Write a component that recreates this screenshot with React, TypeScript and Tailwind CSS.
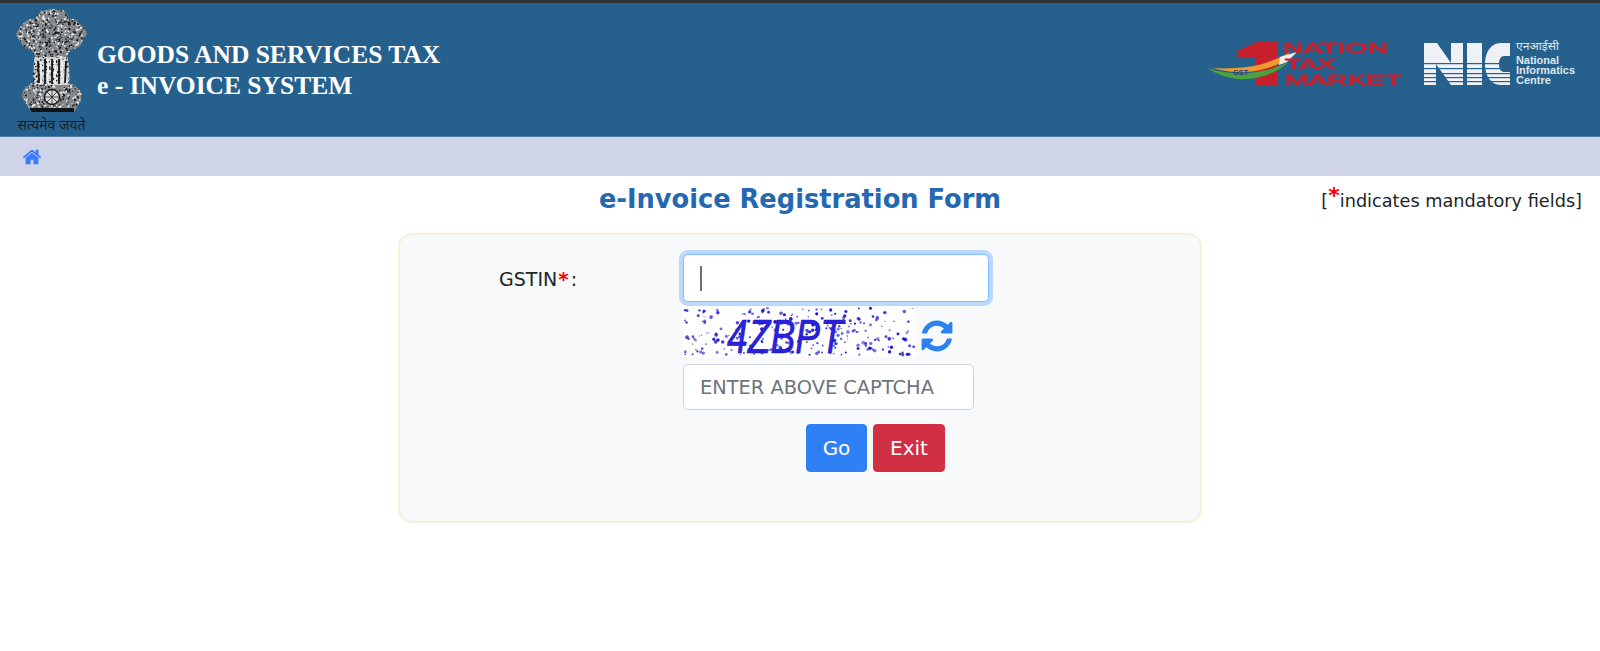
function rng(seed: number) {
  let s = seed
  return () => {
    s = (s * 16807) % 2147483647
    return s / 2147483647
  }
}

const emblemDots = (() => {
  const r = rng(77)
  return Array.from({ length: 1500 }, () => ({ x: r() * 71, y: r() * 103, d: r() > 0.45, s: 0.4 + r() * 0.7 }))
})()

const captchaDots = (() => {
  const r = rng(4242)
  return Array.from({ length: 260 }, () => ({ x: 2 + r() * 229, y: 2 + r() * 47, s: 0.6 + r() * 1.3, o: 0.5 + r() * 0.5 }))
})()

function Emblem() {
  return (
    <svg width="71" height="103" viewBox="0 0 71 103" className="block blur-[0.3px]">
      <defs>
        <clipPath id="emblem-clip">
          <path d="M26 3c4-3 14-4 20-2 5 2 7 6 7 9 5-1 9 1 12 5 3 3 5 6 6 10-2 4-5 7-6 11-3 3-7 5-11 5-1 3-2 4-3 6 2 8 3 18 2 27 6 2 9 4 11 8 3 4 2 9-1 12-1 3-3 6-5 9H16c-3-3-5-6-6-9-4-4-5-8-3-12 2-4 6-7 10-8 0-9 0-19 2-27-1-2-3-3-3-6-4 0-8-2-10-5-2-4-4-8-6-11 2-4 4-7 7-10 3-4 8-6 13-5 0-3 2-6 6-9z" />
        </clipPath>
      </defs>
      <g clipPath="url(#emblem-clip)">
        <rect width="71" height="103" fill="#85888b" />
        <rect x="18" y="48" width="36" height="28" fill="#cfd1d2" />
        {emblemDots.map((p, i) => (
          <circle key={i} cx={p.x} cy={p.y} r={p.s} fill={p.d ? '#16181b' : '#f2f3f3'} />
        ))}
        <path d="M22 52l1 22M29 50v25M36 50v25M43 50v25M50 52l-1 22" stroke="#15171a" strokeWidth="1.8" fill="none" />
        <path d="M25 52v22M32 51v24M39 51v24M46 52v22" stroke="#f4f5f5" strokeWidth="1.6" fill="none" />
        <circle cx="36" cy="88" r="7.5" fill="#d6d8d8" stroke="#15171a" strokeWidth="1.3" />
        <path d="M36 81v15M29 88h15M31 83l10 10M41 83L31 93" stroke="#15171a" strokeWidth="0.7" />
        <rect x="14" y="99" width="44" height="4" fill="#111316" />
      </g>
    </svg>
  )
}

function TaxLogo() {
  return (
    <svg width="210" height="50" viewBox="0 0 210 50" className="block blur-[0.3px]">
      <path d="M37 11L57 2h21v44H56V18H37z" fill="#c5202c" />
      <path d="M13 28c12 1 24 0 34-1 16-2 31-8 43-15l-7 10c-10 5-23 9-36 10-12 1-24-1-34-4z" fill="#ef9a2e" />
      <path d="M80 17l17-5-10 10-8 3z" fill="#f4efe6" />
      <path d="M7 28c12 4 26 6 40 5 15-1 30-5 41-11-8 9-24 16-41 17-15 1-29-4-40-11z" fill="#4aa23a" />
      <text x="33" y="35" fontFamily="'Liberation Sans', sans-serif" fontWeight="700" fontSize="7.5" fill="#23356f">GST</text>
      <g fontFamily="'Liberation Sans', sans-serif" fill="#c9202f" stroke="#c9202f" strokeWidth="0.8">
        <text x="83" y="13" fontSize="14" textLength="105" lengthAdjust="spacingAndGlyphs">NATION</text>
        <text x="85" y="29" fontSize="14" textLength="50" lengthAdjust="spacingAndGlyphs">TAX</text>
        <text x="85" y="45" fontSize="14" textLength="117" lengthAdjust="spacingAndGlyphs">MARKET</text>
      </g>
    </svg>
  )
}

function NicLogo() {
  return (
    <svg width="152" height="48" viewBox="0 0 152 48" className="block">
      <path d="M0 3h13l14 20V3h12v42H27L12 24v21H0zM43 3h15v42H43zM86 3H77C67 3 61 12 61 24s6 21 16 21h9V32h-6c-3 0-5-3-5-8s2-8 5-8h6z" fill="#eef2f6" />
      {[23, 28, 33, 37, 41].map(y => (
        <rect key={y} x="0" y={y} width="88" height="1.2" fill="#26618d" />
      ))}
      <g fill="#dfe7ee" fontFamily="'Liberation Sans', sans-serif" fontWeight="700" fontSize="10">
        <text x="92" y="24" textLength="43" lengthAdjust="spacingAndGlyphs">National</text>
        <text x="92" y="34" textLength="59" lengthAdjust="spacingAndGlyphs">Informatics</text>
        <text x="92" y="44" textLength="35" lengthAdjust="spacingAndGlyphs">Centre</text>
      </g>
      <text x="92" y="10" fill="#dfe7ee" fontSize="10.5" fontFamily="'Noto Sans', sans-serif" textLength="43" lengthAdjust="spacingAndGlyphs">एनआईसी</text>
    </svg>
  )
}

function Captcha() {
  return (
    <svg width="233" height="51" viewBox="0 0 233 51" className="block bg-white shrink-0 overflow-visible">
      {captchaDots.map((p, i) => (
        <circle key={i} cx={p.x} cy={p.y} r={p.s} fill="#1a12c8" opacity={p.o} />
      ))}
      <text x="44" y="47" fontFamily="'Liberation Sans', sans-serif" fontStyle="italic" fontSize="49" fill="#2a22d8" stroke="#1a12c8" strokeWidth="0.6" textLength="116" lengthAdjust="spacingAndGlyphs">4ZBPT</text>
    </svg>
  )
}

export default function App() {
  return (
    <div className="min-h-[651px] bg-white font-['DejaVu_Sans',sans-serif] text-[#212529]">
      <div className="h-[3px] bg-[#2f3336]" />
      <header className="h-[134px] bg-[#26618d] flex border-b border-[#4f7aa8]">
        <div className="ml-4 mt-[6px] w-[71px] flex flex-col items-center">
          <Emblem />
          <span className="text-[14px] leading-[16px] mt-[5px] text-[#16202a] whitespace-nowrap font-['Noto_Sans',sans-serif]">सत्यमेव जयते</span>
        </div>
        <div className="ml-[10px] mt-[36px] font-['Liberation_Serif',serif] font-bold text-white text-[25.5px] leading-[31px]">
          <div>GOODS AND SERVICES TAX</div>
          <div>e - INVOICE SYSTEM</div>
        </div>
        <div className="ml-auto mr-[24px] mt-[37px] flex items-start gap-[14px]">
          <TaxLogo />
          <NicLogo />
        </div>
      </header>
      <nav className="h-[39px] bg-[#cfd4e8] flex items-center pl-[22px]">
        <svg width="20" height="20" viewBox="0 0 1792 1792" fill="#3b7cff">
          <path d="M1472 992v480q0 26-19 45t-45 19h-384v-384h-256v384h-384q-26 0-45-19t-19-45v-480q0-1 .5-3t.5-3l575-474 575 474q1 2 1 6zm223-69l-62 74q-8 9-21 11h-3q-13 0-21-7l-692-577-692 577q-12 8-24 7-13-2-21-11l-62-74q-8-10-7-23.500t11-21.500l719-599q32-26 76-26t76 26l244 204v-195q0-14 9-23t23-9h192q14 0 23 9t9 23v408l219 182q10 8 11 21.500t-7 23.500z" />
        </svg>
      </nav>
      <div className="relative h-[57px] flex justify-center pt-[5px]">
        <h1 className="text-[25.7px] leading-[36px] font-bold text-[#2368b0]">e-Invoice Registration Form</h1>
        <div className="absolute right-[18px] top-[9px] text-[17.7px] leading-6 whitespace-nowrap">
          [<span className="text-[#ff0000] text-[22px] leading-none font-bold align-[4px]">*</span>indicates mandatory fields]
        </div>
      </div>
      <div className="w-[804px] h-[290px] mx-auto bg-[#f8f9fa] border-2 border-[#f9f0dc] rounded-[14px] pt-[19px] pl-[99px]">
        <div className="flex">
          <label className="w-[184px] pt-[13px] text-[19px] leading-6 whitespace-nowrap">
            GSTIN<span className="ml-px mr-[2px] text-[#ff0000] text-[20px] leading-none font-bold">*</span>:
          </label>
          <div className="w-[306px]">
            <div className="relative">
              <input className="block w-[306px] h-[48px] bg-white border border-[#80bdff] rounded-[5px] shadow-[0_0_0_4px_rgba(0,123,255,0.25)] outline-none caret-transparent" />
              <span className="absolute left-[17px] top-[12px] w-[1.5px] h-[25px] bg-[#6b7075]" />
            </div>
            <div className="mt-1 flex items-end gap-[3px]">
              <Captcha />
              <svg width="36" height="36" viewBox="0 0 1792 1792" fill="#2c83f0" className="mb-[3px] shrink-0">
                <path d="M1639 1056q0 5-1 7-64 268-268 434.500t-478 166.500q-146 0-282.500-55t-243.500-157l-129 129q-19 19-45 19t-45-19-19-45v-448q0-26 19-45t45-19h448q26 0 45 19t19 45-19 45l-137 137q71 66 161 102t187 36q134 0 250-65t186-179q11-17 53-117 8-23 30-23h192q13 0 22.500 9.500t9.500 22.500zm25-800v448q0 26-19 45t-45 19h-448q-26 0-45-19t-19-45 19-45l138-138q-148-137-349-137-134 0-250 65t-186 179q-11 17-53 117-8 23-30 23h-199q-13 0-22.500-9.500t-9.500-22.500v-7q65-268 270-434.500t480-166.500q146 0 284 55.500t245 156.500l130-129q19-19 45-19t45 19 19 45z" />
              </svg>
            </div>
            <input
              placeholder="ENTER ABOVE CAPTCHA"
              className="block mt-[7px] w-[291px] h-[46px] px-4 bg-white border-[1.5px] border-[#ced4da] rounded-[5px] text-[19.4px] placeholder:text-[#6c757d] outline-none"
            />
            <div className="mt-[14px] ml-[123px] flex gap-[6px]">
              <button className="w-[61px] h-[48px] bg-[#2f80f5] border border-[#2f80f5] rounded text-white text-[20px]">Go</button>
              <button className="w-[72px] h-[48px] bg-[#d12f43] border border-[#d12f43] rounded text-white text-[20px]">Exit</button>
            </div>
          </div>
        </div>
      </div>
    </div>
  )
}
